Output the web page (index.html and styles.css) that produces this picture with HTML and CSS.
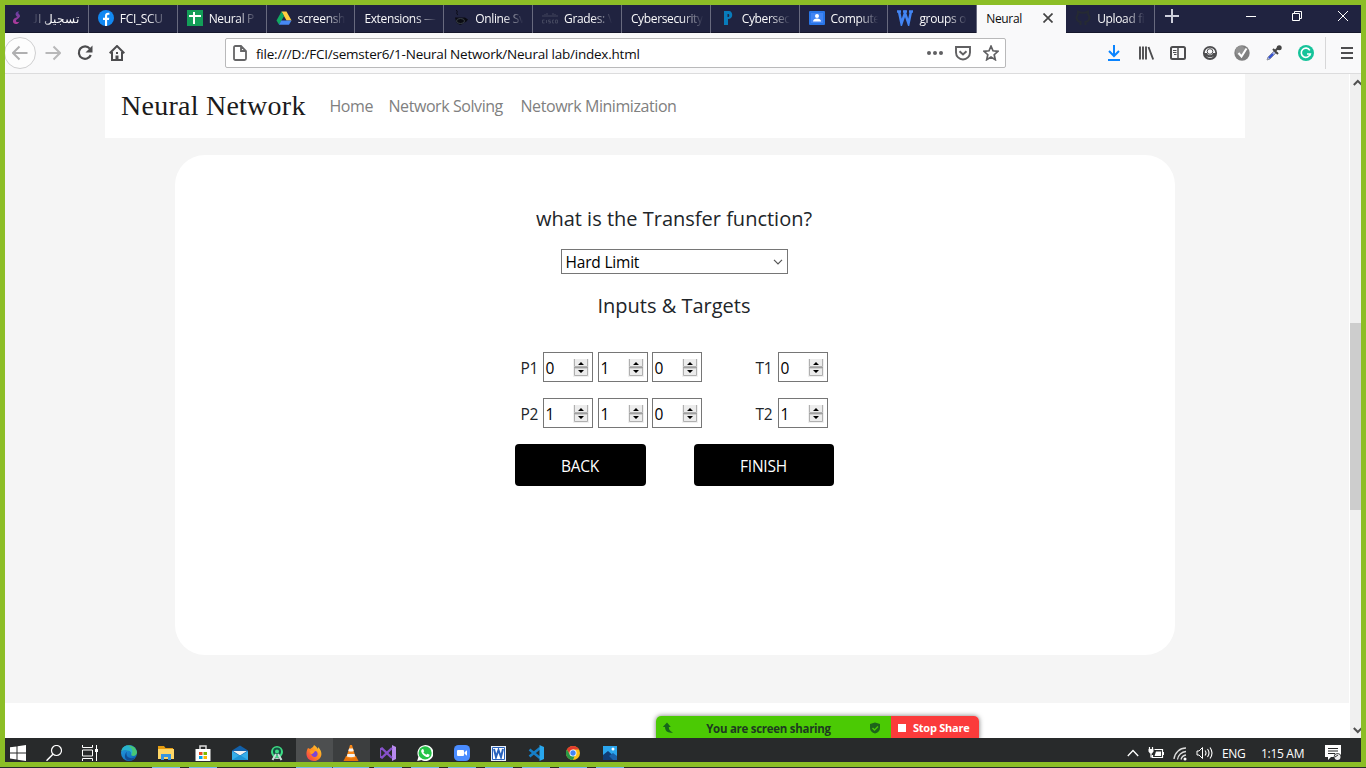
FILE: index.html
```html
<!DOCTYPE html>
<html lang="en">
<head>
<meta charset="utf-8">
<title>Neural</title>
<link rel="stylesheet" href="styles.css">
</head>
<body>
<svg class="defs" width="0" height="0">
  <symbol id="spin" viewBox="0 0 16 18">
    <rect width="16" height="18" fill="#f0f0f0"/>
    <path d="M1.5 0v7.500h13V0M1.500 9v7.500h13V9z" fill="#ececec" stroke="#b0b0b0"/>
    <path d="M1 8.500h14" stroke="#a0a0a0"/>
    <path d="M5 6L8 3 11 6zM5 11L8 14 11 11z" fill="#000"/>
  </symbol>
</svg>
<div class="desktop">
  <header class="tabs">
    <div class="tab"><svg class="ico" viewBox="0 0 16 16"><defs><linearGradient id="eg" x2="0" y2="1"><stop stop-color="#5d3fa0"/><stop offset="1" stop-color="#b43a9b"/></linearGradient></defs><path d="M10 1C6 2 5.500 5 8.500 7 5 8 3 10 4.500 13c2 2 5 1 6-1.500-2 1-4 .5-3.500-1 .5-1.500 4-2.500 4-4.500C11 4 8 4 10 1z" fill="url(#eg)"/></svg><span class="t rtl" dir="rtl">تسجيل الد</span></div>
    <div class="tab"><svg class="ico" viewBox="0 0 16 16"><circle cx="8" cy="8" r="8" fill="#1288f2"/><path d="M7 16V10H5V7.800h2V6c0-2.200 1.200-3.300 3-3.300l1.400.1v2h-1C9.300 4.800 9.100 5.500 9.100 6v1.800h2.200L10.900 10H9.100v6z" fill="#fff"/></svg><span class="t">FCI_SCU</span></div>
    <div class="tab"><svg class="ico" viewBox="0 0 16 16"><path d="M0 0h16v16H0z" fill="#139e58"/><path d="M2 6h12M7 2v12" stroke="#fff" stroke-width="2"/></svg><span class="t">Neural P</span></div>
    <div class="tab"><svg class="ico" viewBox="0 0 16 16"><path d="M5.500 1.500h5l5 9h-5z" fill="#ffcd40"/><path d="M5.500 1.500l2.600 4.500-5 8.800L.5 10.500z" fill="#11a861"/><path d="M5.300 10.500h10.200L13 14.800H3z" fill="#4688f4"/></svg><span class="t">screensh</span></div>
    <div class="tab"><span class="t long">Extensions —</span></div>
    <div class="tab"><svg class="ico" viewBox="0 0 16 16"><path d="M3 0c3 2-1 3 2 5" fill="none" stroke="#090a12"/><path d="M2 7.500h10l3 2-2 2.500-2 .5c-2 3-6 3-8-1z" fill="#0a0b12"/><ellipse cx="7.500" cy="11" rx="4" ry="2.500" fill="none" stroke="#394047"/></svg><span class="t">Online Sv</span></div>
    <div class="tab"><svg class="ico" viewBox="0 0 16 16"><path d="M1 5v2M3 4v3M5 3v4M7 5v2M9 5v2M11 3v4M13 4v3M15 5v2" stroke="#42465d"/><path d="M2.500 10h-2v3h2M4.500 10v3M8.500 10h-2v1.500h2V13h-2M12 10h-1.500v3H12M13.500 10h2v3h-2z" fill="none" stroke="#42465d"/></svg><span class="t">Grades: \</span></div>
    <div class="tab"><span class="t long">Cybersecurity</span></div>
    <div class="tab"><svg class="ico" viewBox="0 0 16 16"><path d="M4 1h5c4 0 5 8-1 8v6H4zM7.500 4v3h1c1 0 1-3 0-3z" fill="#087bbb" fill-rule="evenodd"/></svg><span class="t">Cybersec</span></div>
    <div class="tab"><svg class="ico" viewBox="0 0 16 16"><rect y="1" width="16" height="14" rx="1" fill="#2875e8"/><path d="M2 3h12v10H2z" fill="#4285f4"/><circle cx="8" cy="6" r="2" fill="#fff"/><path d="M4 11.500c0-4 8-4 8 0z" fill="#fff"/></svg><span class="t">Compute</span></div>
    <div class="tab"><svg class="ico" viewBox="0 0 16 16"><path d="M2 1.500l2.500 12L8 3l3.500 10.500L14 1.500M0 1.500h4M6 1.500h4M12 1.500h4" fill="none" stroke="#4285f4" stroke-width="2.500"/></svg><span class="t">groups o</span></div>
    <div class="tab active"><span class="t">Neural</span><svg class="close" viewBox="0 0 10 10"><path d="M.5.5l9 9M9.500.5L.5 9.500" stroke="#444" stroke-width="1.700"/></svg></div>
    <div class="tab"><svg class="ico" viewBox="0 0 16 16"><path d="M5.500 15v-3c-4-.5-5-5-2.700-7.200L3 1.500l3 1.200h4l3-1.200.2 3.300C15.500 7 14.500 11.500 10.500 12v3" fill="none" stroke="#252a33" stroke-width="2"/></svg><span class="t">Upload fi</span></div>
    <svg class="plus" viewBox="0 0 14 14"><path d="M7 0v14M0 7h14" stroke="#ced0dc" stroke-width="2"/></svg>
    <div class="winctl">
      <svg viewBox="0 0 10 10"><path d="M0 5.500h10" stroke="#fff"/></svg>
      <svg viewBox="0 0 10 10"><path d="M.5 2.500h7v7h-7zM2.500 2V.5h7v7H8" fill="none" stroke="#fff"/></svg>
      <svg viewBox="0 0 10 10"><path d="M0 0l10 10M10 0L0 10" stroke="#fff"/></svg>
    </div>
  </header>

  <nav class="toolbar">
    <span class="btn back"><svg viewBox="0 0 16 16"><path d="M15.500 8H1M7.500 1.500L1 8l6.500 6.500" fill="none" stroke="#b0b0b1" stroke-width="2"/></svg></span>
    <span class="btn"><svg viewBox="0 0 16 16"><path d="M.5 8H15M8.500 1.500L15 8l-6.500 6.500" fill="none" stroke="#b8b8b9" stroke-width="2"/></svg></span>
    <span class="btn"><svg viewBox="0 0 16 16"><path d="M12.800 3.600A6.200 6.200 0 1 0 13.800 10" fill="none" stroke="#4d4d4f" stroke-width="2.200"/><path d="M15.500.5v7h-7z" fill="#4d4d4f"/></svg></span>
    <span class="btn"><svg viewBox="0 0 16 16"><path d="M.7 8.300L8 1l7.300 7.300M3 7v8h10V7" fill="none" stroke="#4d4d4f" stroke-width="2"/><path d="M6.500 15v-4.500h3V15M7 7h2v2H7z" fill="#4d4d4f"/></svg></span>
    <div class="url">
      <svg class="page" viewBox="0 0 14 16"><path d="M1 2.500Q1 1 2.500 1H8l5 5v7.500q0 1.500-1.500 1.500h-9Q1 15 1 13.500zM8 1v5h5" fill="none" stroke="#656567" stroke-width="1.800"/></svg>
      <span class="addr">file:///D:/FCI/semster6/1-Neural Network/Neural lab/index.html</span>
      <svg viewBox="0 0 16 16"><circle cx="2" cy="8" r="2" fill="#606062"/><circle cx="8" cy="8" r="2" fill="#606062"/><circle cx="14" cy="8" r="2" fill="#606062"/></svg>
      <svg viewBox="0 0 16 16"><path d="M1 2h14v5.500a7 7 0 0 1-14 0z" fill="none" stroke="#606062" stroke-width="1.900"/><path d="M4.500 6.300L8 9.500l3.500-3.200" fill="none" stroke="#606062" stroke-width="2"/></svg>
      <svg viewBox="0 0 16 16"><path d="M8 1.200l2 4.600 5 .5-3.800 3.400 1.100 5L8 12.100l-4.300 2.600 1.100-5L1 6.300l5-.5z" fill="none" stroke="#606062" stroke-width="1.700"/></svg>
    </div>
    <div class="tools">
      <span class="btn"><svg viewBox="0 0 16 16"><path d="M8 0v10.500M3 6l5 5 5-5M2 15h12" fill="none" stroke="#0a84ff" stroke-width="2"/></svg></span>
      <span class="btn"><svg viewBox="0 0 16 16"><path d="M2 1.500v13M5 1.500v13M8 1.500v13M10.500 2l4.700 12.500" fill="none" stroke="#4d4d4f" stroke-width="1.900"/></svg></span>
      <span class="btn"><svg viewBox="0 0 16 16"><rect x="1" y="2" width="14" height="12" rx="1.500" fill="none" stroke="#4d4d4f" stroke-width="2"/><path d="M8 2v12" stroke="#4d4d4f" stroke-width="1.500"/><path d="M3 5.500h3.500M3 7.500h3.500M4 9.500h2.500" stroke="#4d4d4f"/></svg></span>
      <span class="btn"><svg viewBox="0 0 16 16"><circle cx="8" cy="8" r="6.200" fill="none" stroke="#4d4d4f" stroke-width="1.800"/><path d="M2 8h3c1 3 5 3 6 0h3c0 8-12 8-12 0z" fill="#4d4d4f"/><circle cx="8" cy="6.500" r="2.800" fill="#f9f9fa" stroke="#4d4d4f"/><path d="M4 11q4 2.500 8 0-4 4-8 0z" fill="#f9f9fa"/></svg></span>
      <span class="btn"><svg viewBox="0 0 16 16"><circle cx="8" cy="8" r="7.700" fill="#7f7f7f"/><circle cx="6.500" cy="6" r="5" fill="#929292"/><path d="M4.500 8l3 3.500 5-8" fill="none" stroke="#fff" stroke-width="2"/></svg></span>
      <span class="btn"><svg viewBox="0 0 16 16"><path d="M1 15l1-3 6-6 2 2-6 6z" fill="#a5b2e5" stroke="#8f92a0"/><path d="M3 13l4-4" stroke="#304ed1" stroke-width="2"/><path d="M7 4l5 5M9 6l4-4" stroke="#444" stroke-width="2"/><circle cx="13.200" cy="2.800" r="2.500" fill="#444"/></svg></span>
      <span class="btn"><svg viewBox="0 0 16 16"><circle cx="8" cy="8" r="8" fill="#15c39a"/><path d="M11.800 5.300A4.600 4.600 0 1 0 12.300 9H9M11.800 8.500V11" fill="none" stroke="#fff" stroke-width="1.600"/></svg></span>
      <span class="btn menu"><svg viewBox="0 0 16 16"><path d="M2 3h12M2 8h12M2 13h12" stroke="#4d4d4f" stroke-width="2"/></svg></span>
    </div>
  </nav>

  <div class="viewport">
    <main class="content">
      <section class="hero">
        <div class="navbar">
          <span class="brand">Neural Network</span>
          <a class="n1">Home</a><a class="n2">Network Solving</a><a class="n3">Netowrk Minimization</a>
        </div>
        <div class="card">
          <h5 class="q">what is the Transfer function?</h5>
          <div class="select"><span>Hard Limit</span><svg width="10" height="6" viewBox="0 0 10 6"><path d="M1 .8l4 4 4-4" fill="none" stroke="#555" stroke-width="1.200"/></svg></div>
          <h5 class="it">Inputs &amp; Targets</h5>
          <div class="row">
            <label>P1</label><span class="num">0<svg><use href="#spin"/></svg></span><span class="num">1<svg><use href="#spin"/></svg></span><span class="num third">0<svg><use href="#spin"/></svg></span>
            <label class="target">T1</label><span class="num">0<svg><use href="#spin"/></svg></span>
          </div>
          <div class="row">
            <label>P2</label><span class="num">1<svg><use href="#spin"/></svg></span><span class="num">1<svg><use href="#spin"/></svg></span><span class="num third">0<svg><use href="#spin"/></svg></span>
            <label class="target">T2</label><span class="num">1<svg><use href="#spin"/></svg></span>
          </div>
          <div class="actions"><span class="action">BACK</span><span class="action finish">FINISH</span></div>
        </div>
      </section>
    </main>
    <aside class="scroll">
      <svg viewBox="0 0 11 17"><path d="M3.800 11l4-4 4 4" fill="none" stroke="#505050" stroke-width="2"/></svg>
      <div class="thumb"></div>
      <svg viewBox="0 0 11 17"><path d="M3.800 7l4 4 4-4" fill="none" stroke="#505050" stroke-width="2"/></svg>
    </aside>
    <div class="share">
      <div class="sharing"><svg width="12" height="12" viewBox="0 0 12 12"><path d="M.8 5L5 .5 8.800 5H6.800C6.800 8 8 9 11 10.500 6 11.500 3 9 3 5z" fill="#17651a"/></svg><span>You are screen sharing</span><svg width="12" height="12" viewBox="0 0 12 12"><path d="M6 .5l5 1.500v4c0 3-2 4.500-5 5.500-3-1-5-2.500-5-5.500V2z" fill="#1d641a"/><path d="M3.500 6l2 2L9 4.500" fill="none" stroke="#4bca04" stroke-width="1.400"/></svg></div>
      <div class="stop"><i></i><span>Stop Share</span></div>
    </div>
  </div>

  <footer class="taskbar">
    <span class="sys"><svg viewBox="0 0 16 16"><path d="M0 2.300l6.500-.9v6H0zM7.500 1.200L16 0v7.400H7.500zM0 8.400h6.500v6L0 13.500zM7.500 8.400H16V16l-8.500-1.300z" fill="#fff"/></svg></span>
    <span class="sys"><svg viewBox="0 0 16 16"><circle cx="10.500" cy="5.500" r="5" fill="none" stroke="#fff" stroke-width="1.200"/><path d="M6.900 9.200L.5 15.700" stroke="#fff" stroke-width="1.500"/></svg></span>
    <span class="sys"><svg viewBox="0 0 16 16"><path d="M.5 0v2.500h10V0M.5 16v-2.500h10V16M.5 5h10v6H.5zM14.500 0v16" fill="none" stroke="#fff"/><path d="M13 4h3v3h-3z" fill="#fff"/></svg></span>
    <span class="app first"><svg viewBox="0 0 16 16"><defs><linearGradient id="ed" y2="1"><stop stop-color="#249ee0"/><stop offset="1" stop-color="#0c61b4"/></linearGradient></defs><circle cx="8" cy="8" r="8" fill="url(#ed)"/><path d="M.5 6C2-1.500 14.500-1.500 16 7c.2 4-4 5-6 3 2-3-1-5-4-4.800C3.500 5 1.500 5 .5 6z" fill="#48c775"/><path d="M.5 6C2 1 6-.5 9 2c3 2 3 6 1 8 1-3-1-4.500-4-4.800C3.500 5 1.500 5 .5 6z" fill="#28b2ce"/><path d="M6 7c-2 4 2 8 8 5.500-4 5.500-11 3-10-2C4.300 8.500 5 7.500 6 7z" fill="#104d94"/></svg></span>
    <span class="app run"><svg viewBox="0 0 16 16"><path d="M0 1h6l1.500 2H15v5H0z" fill="#e59c10"/><path d="M0 4h16v10H0z" fill="#ffd666"/><path d="M3 15V9h10v6h-3v-3H6v3z" fill="#3995de"/></svg></span>
    <span class="app run"><svg viewBox="0 0 16 16"><path d="M5 5V1h6v4" fill="none" stroke="#ddd" stroke-width="1.500"/><path d="M.5 4h15v12H.5z" fill="#fff"/><path d="M4 7h3.500v3H4z" fill="#e74c25"/><path d="M8.500 7H12v3H8.500z" fill="#7eb900"/><path d="M4 11h3.500v3H4z" fill="#00a3ee"/><path d="M8.500 11H12v3H8.500z" fill="#ffb900"/></svg></span>
    <span class="app"><svg viewBox="0 0 16 16"><path d="M0 5.500L8 .5l8 5V15H0z" fill="#1260a9"/><path d="M1 6h14L8 10.500z" fill="#f1f1f1"/><path d="M0 6l8 5 8-5v9H0z" fill="#36aee9"/><path d="M0 15l8-5 8 5z" fill="#1d94d6"/></svg></span>
    <span class="app"><svg viewBox="0 0 16 16"><circle cx="8" cy="7" r="6" fill="#3ddc84"/><circle cx="8" cy="6.500" r="4" fill="#174f43"/><circle cx="8" cy="6.500" r="2" fill="#3ddc84"/><path d="M3.500 15l3.500-6M12.500 15L9 9" fill="none" stroke="#c9ded9" stroke-width="2"/><path d="M5 13q3 1 6 0" fill="none" stroke="#c9ded9"/></svg></span>
    <span class="app run wide hot"><svg viewBox="0 0 16 16"><defs><linearGradient id="ff" x1="1" x2="0" y2="1"><stop stop-color="#ffdc32"/><stop offset=".5" stop-color="#ff8a20"/><stop offset="1" stop-color="#f32c5b"/></linearGradient></defs><path d="M2 3l2 1c1-1 3-1 4-4 2 1 3 3 4 4V2c7 7 2 14-4 14-8 0-9-8-6-13z" fill="url(#ff)"/><path d="M5 8c2 1 3-1 4-2 2 0 3 2 2.500 4-1 3-6 3-6.500-2z" fill="#7b45d8"/><path d="M3.500 6c1-1 3-1 4 0L9 7c-2 0-1 2-4 2z" fill="#ff9c22"/></svg></span>
    <span class="app run wide warm"><svg viewBox="0 0 16 16"><path d="M3 11h10l2.500 5H.5z" fill="#e8730a"/><path d="M7 0h2l3.700 12.500q-4.700 2-9.400 0z" fill="#f98717"/><path d="M6.100 3.500h3.800l.8 2.500q-2.700 1-5.400 0zM4.500 9h7l.7 2.500q-4.200 1.500-8.400 0z" fill="#f4f4f4"/></svg></span>
    <span class="app run"><svg viewBox="0 0 16 16"><path d="M12 0l4 2v12l-4 2z" fill="#b98aef"/><path d="M12 3L2 12.500 0 11.500v-7l2-1L12 13" fill="none" stroke="#8651ca" stroke-width="2.300"/></svg></span>
    <span class="app run"><svg viewBox="0 0 16 16"><path d="M.2 16L1.400 11.800A8 8 0 1 1 4.500 15z" fill="#fff"/><circle cx="8.100" cy="7.900" r="6.600" fill="#25c447"/><path d="M5 4.200l1.200-.2 1 2.300-.8 1c.8 1.400 1.800 2 3 2.500l1-1.100 2.200 1c0 2-1.700 2.700-3.200 2.200C7 11.200 4.700 9 4.200 6.500 4.100 5.500 4.500 4.600 5 4.200z" fill="#fff"/></svg></span>
    <span class="app run"><svg viewBox="0 0 16 16"><rect width="16" height="16" rx="4.500" fill="#4a8cff"/><rect x="3" y="5" width="7" height="6" rx="1" fill="#fff"/><path d="M10.500 7.200L13 5.300v5.400l-2.500-1.900z" fill="#fff"/></svg></span>
    <span class="app run"><svg viewBox="0 0 16 16"><path d="M0 1h15v15H0z" fill="#e9f0fa"/><path d="M1.500 2.500h12v12h-12z" fill="#fff" stroke="#2862bd"/><path d="M3 4l2 8 2.500-7L10 12l2-8" fill="none" stroke="#2862bd" stroke-width="2"/></svg></span>
    <span class="app run"><svg viewBox="0 0 16 16"><path d="M12 3L1.500 11.500M12 13L1.500 4.500" stroke="#167fc7" stroke-width="2.600"/><path d="M11.500 0L16 2v12l-4.500 2z" fill="#29a7ee"/></svg></span>
    <span class="app run"><svg viewBox="0 0 16 16"><circle cx="8" cy="8" r="7" fill="#fbc116"/><path d="M1.900 4.500A7 7 0 0 1 14.100 4.500H8L5 9.800z" fill="#e33b2e"/><path d="M1.900 4.500L5 9.800h5L8 15A7 7 0 0 1 1.900 4.500z" fill="#279847"/><circle cx="8" cy="8" r="3.500" fill="#fff"/><circle cx="8" cy="8" r="2.700" fill="#4285f4"/></svg></span>
    <span class="app run"><svg viewBox="0 0 16 16"><path d="M1 1h14v14H1z" fill="#2ba6ee"/><path d="M1 10l5-4 9 8v1H1z" fill="#113d75"/><path d="M7 11l4-3 4 3v4h-4z" fill="#1b62ab"/><circle cx="11" cy="4" r="1.500" fill="#fff"/></svg></span>
    <div class="tray">
      <svg width="12" height="16" viewBox="0 0 12 16"><path d="M.8 11L6 5.500l5.200 5.500" fill="none" stroke="#fff" stroke-width="1.300"/></svg>
      <svg width="16" height="16" viewBox="0 0 16 16"><path d="M6.500 4.500h8v8h-10V10M15.500 7v3M1.500 2v2M4.500 2v2M3 7.500V12h2" fill="none" stroke="#fff" stroke-width="1.200"/><path d="M.5 4h5v2.500l-1.500 2H2l-1.500-2zM8 6.500h5V11H6.500z" fill="#fff"/></svg>
      <svg width="14" height="16" viewBox="0 0 14 16"><path d="M1 14A12 12 0 0 1 13 3M4.500 14.500A9 9 0 0 1 13 6.500M8 14.500A6 6 0 0 1 13 10" fill="none" stroke="#ddd" stroke-width="1.300"/><circle cx="12" cy="14" r="1.500" fill="#fff"/></svg>
      <svg width="17" height="16" viewBox="0 0 17 16"><path d="M1 6h2l3.500-3.500v11L3 10H1z" fill="none" stroke="#fff"/><path d="M9 5.500q2 2.500 0 5M11.500 4q3 4 0 8M14 2.500q4 5.500 0 11" fill="none" stroke="#fff" stroke-width="1.100"/></svg>
      <span class="lang">ENG</span><span class="clock">1:15 AM</span>
      <svg width="17" height="16" viewBox="0 0 17 16"><path d="M0 0h16v12H6l-3 3v-3H0z" fill="#fff"/><path d="M3 3.500h10M3 6h10M3 8.500h7" stroke="#262829"/><circle cx="12.500" cy="12" r="3.800" fill="#262829"/><circle cx="12.500" cy="12" r="3" fill="#eee"/><path d="M10 12l3-2" stroke="#333"/></svg>
    </div>
  </footer>
  <div class="frame"></div>
</div>
</body>
</html>
```
FILE: styles.css
```css
* { box-sizing: border-box; }
body { margin: 0; font-family: "Open Sans", "Noto Sans", sans-serif; overflow: hidden; }
svg { display: block; flex: none; }
.defs { position: absolute; }
.desktop { position: relative; width: 1366px; height: 768px; display: flex; flex-direction: column; }
.frame { position: absolute; inset: 0 0 1px; border: 5px solid #8cbe26; pointer-events: none; }

.tabs { height: 33px; background: #202340; border-bottom: 1px solid #15172c; display: flex; padding-top: 5px; }
.tab { width: 88.85px; height: 28px; flex: none; border-right: 1px solid #686a7e; display: flex; align-items: center; gap: 6px; padding: 0 1px 2px 9px; color: #f9f9fa; font-size: 12px; letter-spacing: -.35px; }
.tab:first-child { padding-right: 9px; }
.ico { width: 16px; height: 16px; }
.t { flex: 1; min-width: 0; white-space: nowrap; mask-image: linear-gradient(90deg, #000 50%, transparent 86%); }
.long { mask-image: linear-gradient(90deg, #000 65%, transparent 93%); }
.rtl { mask-image: linear-gradient(270deg, #000 58%, transparent 97%); letter-spacing: 0; }
.active { background: #f9f9fa; color: #0c0c0d; border: 0; }
.active .t { mask-image: none; }
.close { width: 10px; height: 10px; margin-right: 12px; }
.plus { width: 14px; height: 14px; margin: 4px 0 0 10px; }
.winctl { display: flex; gap: 36px; margin: 6px 18px 0 auto; }
.winctl svg { width: 10px; height: 10px; }

.toolbar { height: 41px; flex: none; background: #f9f9fa; border-bottom: 1px solid #dcdcdd; display: flex; align-items: center; padding-left: 4px; }
.btn { width: 32px; height: 32px; flex: none; display: flex; align-items: center; justify-content: center; }
.btn svg { width: 16px; height: 16px; }
.back { border: 1px solid #cfcfd0; border-radius: 50%; background: #fdfdfd; margin-right: 1px; }
.url { width: 781px; height: 30px; margin-left: 92px; background: #fff; border: 1px solid #b9b9ba; border-radius: 2px; display: flex; align-items: center; gap: 12px; padding: 0 6px 0 7px; }
.url svg { width: 16px; height: 16px; }
.url .page { width: 14px; }
.addr { flex: 1; margin-left: -3px; padding-top: 2px; font-size: 13.5px; color: #0c0c0d; white-space: nowrap; letter-spacing: -.22px; }
.tools { display: flex; margin-left: 92px; }
.menu { width: 36px; padding-left: 6px; border-left: 1px solid #d7d7d8; margin-left: 3px; }

.viewport { height: 664px; flex: none; display: flex; position: relative; overflow: hidden; padding: 0 5px; background: #fff; }
.content { width: 1344px; margin-right: 1px; }
.hero { height: 629px; background: #f5f5f5; display: flex; flex-direction: column; align-items: center; }
.navbar { width: 1140px; height: 64px; margin-right: 4px; background: #fff; display: flex; align-items: center; padding-left: 16px; font-size: 16px; letter-spacing: -.43px; color: #808080; white-space: nowrap; }
.brand { width: 208.500px; font: 28px "Liberation Serif", serif; letter-spacing: .25px; color: #1b1b1b; }
.n1 { width: 59px; } .n2 { width: 132px; }
.card { width: 1000px; height: 500px; margin: 17px 4px 0 0; padding-right: 2px; border-radius: 30px; background: #fff; display: flex; flex-direction: column; align-items: center; color: #212529; }
h5 { margin: 0; font-size: 20px; font-weight: 400; line-height: 24px; }
.q { margin-top: 52px; }
.select { width: 227px; height: 25px; margin-top: 18px; border: 1px solid #767676; display: flex; align-items: center; justify-content: space-between; padding: 0 4px; color: #000; font-size: 15.5px; letter-spacing: -.2px; }
.it { margin: 20px 0 34px; }
.row { display: flex; align-items: center; height: 30px; margin-bottom: 16px; width: 307px; font-size: 15.5px; letter-spacing: -.3px; }
label { width: 22px; padding-top: 2px; }
.num { width: 50px; height: 30px; margin-right: 5px; border: 1px solid #767676; display: flex; align-items: center; justify-content: space-between; padding: 1px 3px 0 2px; color: #000; }
.num + .num { margin-right: 4px; }
.row .third { margin-right: 54px; }
.row > .num:last-child { margin-right: 0; }
.num svg { width: 16px; height: 18px; }
.actions { display: flex; gap: 48px; }
.action { width: 131px; height: 42px; padding-top: 2px; border-radius: 4px; background: #000; color: #fff; font-size: 15.5px; display: flex; align-items: center; justify-content: center; letter-spacing: -.25px; }
.finish { width: 140px; }

.scroll { width: 11px; background: #f0f0f0; overflow: hidden; }
.scroll svg { width: 11px; height: 17px; }
.thumb { height: 187px; margin: 232px 0 211px; background: #cdcdcd; }

.share { position: absolute; left: 656px; top: 642px; width: 323px; height: 24px; display: flex; border-radius: 5px 5px 0 0; overflow: hidden; box-shadow: 0 0 5px #777; font-size: 11.5px; font-weight: 700; }
.sharing { width: 235px; background: #4bca04; color: #1d3a20; display: flex; align-items: center; justify-content: space-between; padding: 0 10px 0 6px; letter-spacing: -.28px; }
.sharing span { margin-right: 6px; }
.stop { flex: 1; background: #fb3b3b; color: #fff; display: flex; align-items: center; gap: 7px; padding: 0 0 1px 7px; font-size: 11px; white-space: nowrap; letter-spacing: -.25px; }
.stop i { width: 8px; height: 8px; background: #fff; }

.taskbar { height: 30px; flex: none; background: #282a2b; display: flex; }
.taskbar svg { height: 16px; }
.sys, .app { width: 36px; height: 30px; flex: none; display: flex; align-items: center; justify-content: center; }
.sys svg, .app svg { width: 16px; }
.app { width: 37px; padding-right: 1px; }
.first { margin-left: 3px; }
.run { background: linear-gradient(#76b9ed, #76b9ed) 4px bottom / 28px 1px no-repeat; }
.wide { background-size: 36px 1px; background-position: 0 bottom; }
.hot { background-color: #4d4f50; }
.warm { background-color: #3c3e3f; }
.tray { margin-left: auto; padding-right: 24px; display: flex; align-items: center; color: #fff; font-size: 12px; }
.tray svg { margin-right: 9px; }
.tray svg:last-child { margin-right: 0; }
.lang { width: 39px; letter-spacing: -.3px; }
.clock { width: 64px; letter-spacing: -.3px; }
```
